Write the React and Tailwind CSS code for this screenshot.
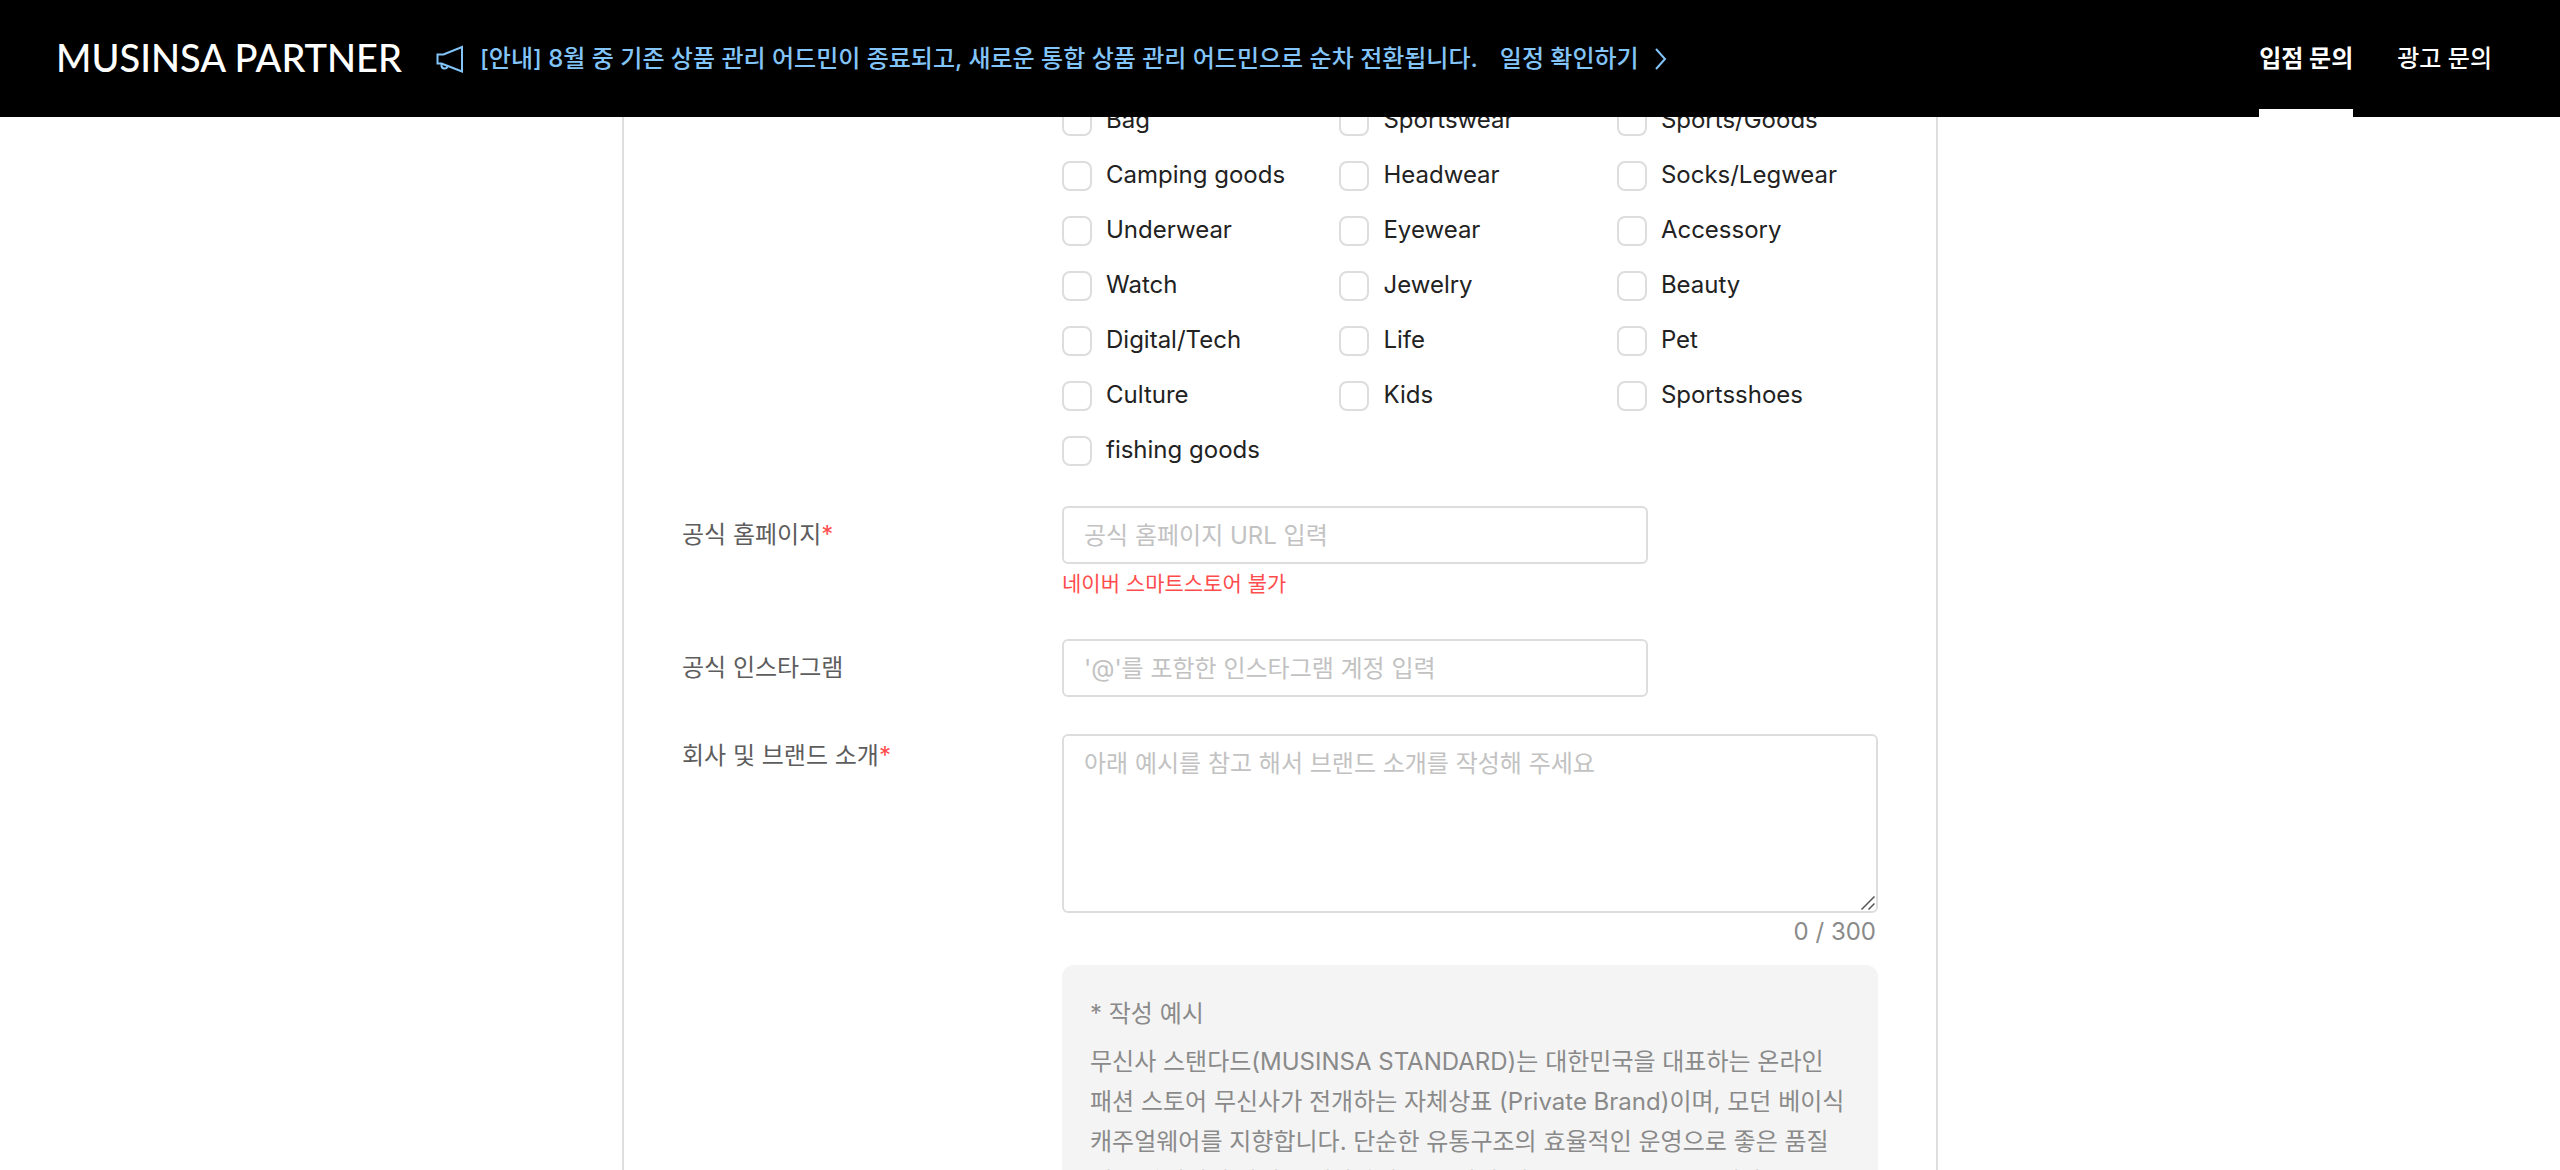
import React, { useState } from "react";

const categories = [
  "Bag",
  "Sportswear",
  "Sports/Goods",
  "Camping goods",
  "Headwear",
  "Socks/Legwear",
  "Underwear",
  "Eyewear",
  "Accessory",
  "Watch",
  "Jewelry",
  "Beauty",
  "Digital/Tech",
  "Life",
  "Pet",
  "Culture",
  "Kids",
  "Sportsshoes",
  "fishing goods",
];

const MegaphoneIcon = () => (
  <svg
    viewBox="0 0 28 28"
    className="w-7 h-7"
    fill="none"
    stroke="currentColor"
    strokeWidth="2"
    aria-hidden="true"
  >
    <path d="M1.5 9.5h6L26 2v24.5L5.5 18.5h-4z" />
    <path d="M5.5 18.5v1.8a3 3 0 0 0 6 .4" />
  </svg>
);

const ArrowIcon = () => (
  <svg
    viewBox="0 0 12 22"
    className="w-3 h-[22px]"
    fill="none"
    stroke="currentColor"
    strokeWidth="2"
    aria-hidden="true"
  >
    <path d="M1 1l9 10-9 10" />
  </svg>
);

const Header = () => (
  <header className="relative z-10 h-[117px] shrink-0 bg-black flex items-center pl-14 pr-[68px] text-2xl">
    <a
      href="#"
      className="pb-1 font-['Lato','Noto_Sans_CJK_KR',sans-serif] text-[38px] leading-none font-medium text-white"
    >
      MUSINSA PARTNER
    </a>
    <a href="#" className="ml-[34px] flex items-center font-medium text-[#83c5f9]">
      <MegaphoneIcon />
      <span className="ml-4">
        [안내] 8월 중 기존 상품 관리 어드민이 종료되고, 새로운 통합 상품 관리
        어드민으로 순차 전환됩니다.
      </span>
      <span className="ml-[22px] mr-4">일정 확인하기</span>
      <ArrowIcon />
    </a>
    <nav className="ml-auto h-full flex gap-11 text-white">
      <a
        href="#"
        className="h-full flex items-center border-t-8 border-b-8 border-t-transparent border-b-white font-bold"
      >
        입점 문의
      </a>
      <a href="#" className="h-full flex items-center font-medium">
        광고 문의
      </a>
    </nav>
  </header>
);

const Label = ({ htmlFor, required, children }) => (
  <label htmlFor={htmlFor} className="block leading-10 text-[#5d5d5d]">
    {children}
    {required && <span className="text-[#ff4d4d]">*</span>}
  </label>
);

export default function App() {
  const [checked, setChecked] = useState([]);
  const [intro, setIntro] = useState("");

  const toggle = (name) =>
    setChecked((prev) =>
      prev.includes(name) ? prev.filter((n) => n !== name) : [...prev, name]
    );

  return (
    <div className="h-screen overflow-hidden flex flex-col bg-white text-2xl font-['Inter','Noto_Sans_CJK_KR',sans-serif]">
      <Header />

      <main className="flex-1 min-h-0 w-full max-w-[1316px] mx-auto border-x-2 border-[#dedede] px-[58px]">
        {/* Categories, scrolled partly under the header */}
        <div className="-mt-6 flex">
          <div className="w-[380px] shrink-0" />
          <ul className="flex-1 grid grid-cols-[34%_34%_1fr]">
            {categories.map((name) => (
              <li key={name}>
                <label className="flex items-center gap-3.5 h-[55px] text-[#222222]">
                  <input
                    type="checkbox"
                    checked={checked.includes(name)}
                    onChange={() => toggle(name)}
                    className="appearance-none w-[30px] h-[30px] rounded-lg border-2 border-[#dddddd] bg-white checked:bg-black"
                  />
                  <span className="pb-0.5">{name}</span>
                </label>
              </li>
            ))}
          </ul>
        </div>

        <div className="mt-7 flex">
          <div className="w-[380px] shrink-0 pt-[9px]">
            <Label htmlFor="homepage" required>
              공식 홈페이지
            </Label>
          </div>
          <div>
            <input
              id="homepage"
              type="url"
              placeholder="공식 홈페이지 URL 입력"
              className="block w-[586px] h-[58px] px-5 rounded-md border-2 border-[#dddddd] placeholder:text-[#c2c2c2]"
            />
            <p className="mt-1 text-[21px] leading-8 text-[#ff4d4d]">
              네이버 스마트스토어 불가
            </p>
          </div>
        </div>

        <div className="mt-[39px] flex">
          <div className="w-[380px] shrink-0 pt-[9px]">
            <Label htmlFor="instagram">공식 인스타그램</Label>
          </div>
          <input
            id="instagram"
            type="text"
            placeholder="'@'를 포함한 인스타그램 계정 입력"
            className="block w-[586px] h-[58px] px-5 rounded-md border-2 border-[#dddddd] placeholder:text-[#c2c2c2]"
          />
        </div>

        <div className="mt-[37px] flex">
          <div className="w-[380px] shrink-0 pt-0.5">
            <Label htmlFor="intro" required>
              회사 및 브랜드 소개
            </Label>
          </div>
          <div className="flex-1">
            <div className="relative">
              <textarea
                id="intro"
                maxLength={300}
                value={intro}
                onChange={(e) => setIntro(e.target.value)}
                placeholder="아래 예시를 참고 해서 브랜드 소개를 작성해 주세요"
                className="block w-full h-[179px] resize-none px-5 py-2 leading-10 rounded-md border-2 border-[#dddddd] placeholder:text-[#c2c2c2]"
              />
              <svg
                viewBox="0 0 14 14"
                className="absolute right-[3px] bottom-[3px] w-3.5 h-3.5 pointer-events-none"
                stroke="#555555"
                strokeWidth="1.5"
                aria-hidden="true"
              >
                <path d="M0.5 13.5l13-13M7.5 13.5l6-6" />
              </svg>
            </div>
            <p className="pt-px pr-0.5 text-right leading-9 text-[#8a8a8a]">
              {intro.length} / 300
            </p>
            <div className="mt-[15px] rounded-xl bg-[#f4f4f4] px-7 py-[29px] leading-10 text-[#8a8a8a] break-keep">
              <p>* 작성 예시</p>
              <p className="mt-2">
                무신사 스탠다드(MUSINSA STANDARD)는 대한민국을 대표하는 온라인
                패션 스토어 무신사가 전개하는 자체상표 (Private Brand)이며, 모던
                베이식 캐주얼웨어를 지향합니다. 단순한 유통구조의 효율적인
                운영으로 좋은 품질 대비 합리적인 가격을 제안하며, 시즌마다
                새로운 상품을 선보입니다.
              </p>
            </div>
          </div>
        </div>
      </main>
    </div>
  );
}
